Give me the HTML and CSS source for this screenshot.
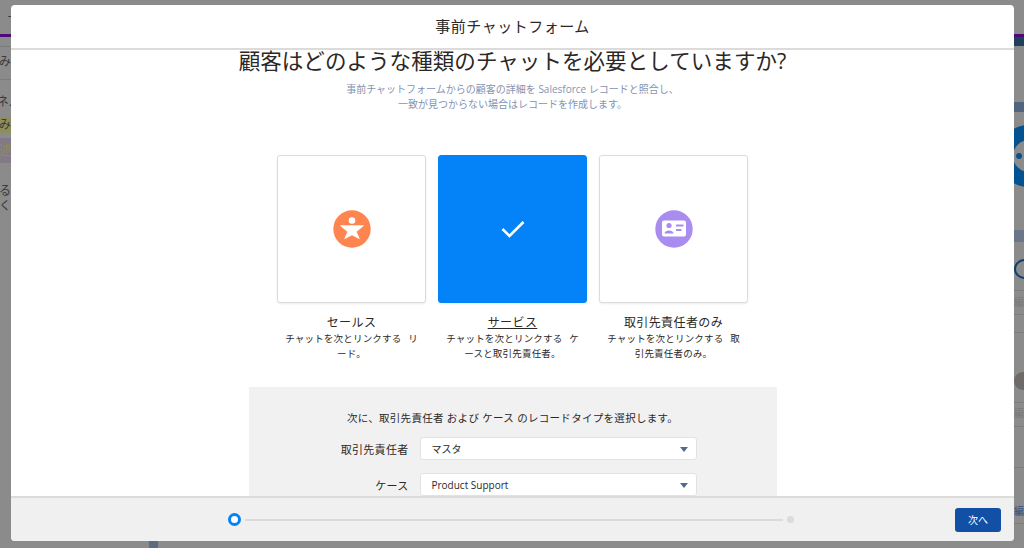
FILE: index.html
```html
<!DOCTYPE html>
<html lang="ja">
<head>
    <meta charset="UTF-8">
    <title>事前チャットフォーム</title>
    <link rel="stylesheet" href="styles.css">
</head>
<body>

    <!-- Dimmed page behind the dialog -->
    <div class="backdrop">
        <div class="back-bar"></div>
        <div class="back-rule back-rule-a"></div>
        <div class="back-rule back-rule-b"></div>
        <div class="back-left">
            <div class="back-line back-line-top">ー</div>
            <div class="back-line back-line-a">組み</div>
            <div class="back-line back-line-b">ネ.</div>
            <div class="back-line back-line-c">組み</div>
            <div class="back-line back-line-d">述</div>
            <div class="back-line back-line-e">いる<br>べく</div>
        </div>
        <div class="back-right">
            <div class="back-navy"></div>
            <div class="back-head back-head-a"></div>
            <div class="back-ring"></div>
            <div class="back-dot"></div>
            <div class="back-head back-head-b"></div>
            <div class="back-arc"></div>
            <div class="back-divider back-divider-a"></div>
            <div class="back-text back-text-a">編集</div>
            <div class="back-divider back-divider-b"></div>
            <div class="back-divider back-divider-c"></div>
            <div class="back-pill"></div>
            <div class="back-divider back-divider-d"></div>
            <div class="back-text back-text-b">編集</div>
            <div class="back-divider back-divider-e"></div>
            <div class="back-divider back-divider-f"></div>
            <div class="back-text back-text-c">編集</div>
            <div class="back-divider back-divider-g"></div>
        </div>
        <div class="back-stub"></div>
    </div>

    <div class="modal">
        <div class="modal-header">事前チャットフォーム</div>

        <div class="modal-body">
            <h1>顧客はどのような種類のチャットを必要としていますか?</h1>
            <p class="intro">事前チャットフォームからの顧客の詳細を Salesforce レコードと照合し、<br>一致が見つからない場合はレコードを作成します。</p>

            <div class="options">
                <div class="option">
                    <div class="tile">
                        <svg class="icon" viewBox="0 0 38 38">
                            <circle cx="19" cy="19" r="18.7" fill="#ff8550"/>
                            <circle cx="19" cy="10.5" r="3.3" fill="#fff"/>
                            <path d="M7.2 15.6 L30.8 15.6 L23.4 21.8 L26.4 28.8 L19 25 L11.6 28.8 L14.6 21.8 Z" fill="#fff" stroke="#fff" stroke-width="0.5" stroke-linejoin="round"/>
                        </svg>
                    </div>
                    <div class="option-title">セールス</div>
                    <div class="option-text">チャットを次とリンクする リード。</div>
                </div>
                <div class="option">
                    <div class="tile tile-on">
                        <svg class="check" viewBox="0 0 24 18">
                            <path d="M1.5 9 L8.5 16 L22.5 2" fill="none" stroke="#fff" stroke-width="2.6"/>
                        </svg>
                    </div>
                    <div class="option-title option-title-on"><span>サービス</span></div>
                    <div class="option-text">チャットを次とリンクする ケースと取引先責任者。</div>
                </div>
                <div class="option">
                    <div class="tile">
                        <svg class="icon" viewBox="0 0 38 38">
                            <circle cx="19" cy="19" r="18.7" fill="#a98cf0"/>
                            <rect x="7" y="10.5" width="24" height="16" rx="2" fill="#fff"/>
                            <circle cx="14" cy="15.5" r="2.6" fill="#a98cf0"/>
                            <path d="M9.5 23.5 C9.5 19.5 18.5 19.5 18.5 23.5 Z" fill="#a98cf0"/>
                            <rect x="21" y="14.5" width="7.5" height="2" fill="#a98cf0"/>
                            <rect x="21" y="19" width="5.5" height="2" fill="#a98cf0"/>
                        </svg>
                    </div>
                    <div class="option-title">取引先責任者のみ</div>
                    <div class="option-text">チャットを次とリンクする 取引先責任者のみ。</div>
                </div>
            </div>

            <div class="record-panel">
                <p class="record-note">次に、取引先責任者 および ケース のレコードタイプを選択します。</p>
                <div class="field">
                    <label class="field-label">取引先責任者</label>
                    <div class="select">マスタ<span class="caret"></span></div>
                </div>
                <div class="field">
                    <label class="field-label">ケース</label>
                    <div class="select">Product Support<span class="caret"></span></div>
                </div>
            </div>
        </div>

        <div class="modal-footer">
            <div class="progress">
                <span class="step-current"></span>
                <span class="step-line"></span>
                <span class="step-next"></span>
            </div>
            <button class="next-btn">次へ</button>
        </div>
    </div>

</body>
</html>
```

FILE: styles.css
```css
* {
    box-sizing: border-box;
}
html, body {
    margin: 0;
    height: 100%;
    overflow: hidden;
}
body {
    position: relative;
    width: 1024px;
    height: 548px;
    background-color: #8b8b8b;
    font-family: "Open Sans", "Noto Sans CJK JP", sans-serif;
    color: #2b2826;
}

/* backdrop */
.backdrop {
    position: absolute;
    inset: 0;
    color: #3a3a3a;
    font-size: 12px;
}
.back-bar {
    position: absolute;
    left: 0;
    right: 0;
    top: 34px;
    height: 3px;
    background-color: #4d0a78;
}
.back-rule {
    position: absolute;
    left: 0;
    width: 11px;
    height: 1px;
    background-color: #7b7b7b;
}
.back-rule-a { top: 46px; }
.back-rule-b { top: 79px; }
.back-left {
    position: absolute;
    left: 0;
    top: 0;
    width: 11px;
    height: 240px;
    overflow: hidden;
}
.back-line {
    position: absolute;
    right: 0;
    width: 30px;
    text-align: right;
    white-space: nowrap;
    line-height: 16px;
}
.back-line-top { top: 10px; right: -8px; }
.back-line-a { top: 54px; }
.back-line-b { top: 94px; right: -1px; }
.back-line-c {
    top: 117px;
    background-color: #8e8e5c;
}
.back-line-d {
    top: 138px;
    height: 25px;
    padding-top: 5px;
    text-align: right;
    background-color: #827a86;
    color: #8e8e5c;
}
.back-line-e {
    top: 183px;
    line-height: 15px;
}
.back-right {
    position: absolute;
    left: 1014px;
    top: 0;
    width: 10px;
    height: 548px;
    overflow: hidden;
}
.back-navy {
    position: absolute;
    left: 0;
    right: 0;
    top: 37px;
    height: 9px;
    background-color: #1f3f5f;
}
.back-head {
    position: absolute;
    left: 0;
    right: 0;
}
.back-head-a {
    top: 102px;
    height: 10px;
    background-color: #4f6580;
}
.back-head-b {
    top: 230px;
    height: 12px;
    background-color: #6b7688;
}
.back-ring {
    position: absolute;
    left: -16px;
    top: 125px;
    width: 62px;
    height: 62px;
    border-radius: 50%;
    border: 15px solid #04528f;
    background-color: #8b8b8b;
}
.back-dot {
    position: absolute;
    left: 2px;
    top: 153px;
    width: 6px;
    height: 6px;
    border-radius: 50%;
    background-color: #04528f;
}
.back-arc {
    position: absolute;
    left: 0;
    top: 259px;
    width: 22px;
    height: 20px;
    border-radius: 50%;
    border: 2px solid #0f3f70;
}
.back-pill {
    position: absolute;
    left: 0;
    top: 372px;
    width: 30px;
    height: 18px;
    border-radius: 9px;
    background-color: #6e6a68;
}
.back-divider {
    position: absolute;
    left: 0;
    right: 0;
    height: 1px;
    background-color: #7d7d7d;
}
.back-divider-a { top: 290px; }
.back-divider-b { top: 314px; }
.back-divider-c { top: 332px; }
.back-divider-d { top: 402px; }
.back-divider-e { top: 426px; }
.back-divider-f { top: 467px; }
.back-divider-g { top: 523px; }
.back-text {
    position: absolute;
    left: 0;
    font-size: 10px;
    line-height: 14px;
    color: #797979;
    white-space: nowrap;
}
.back-text-a { top: 295px; }
.back-text-b { top: 406px; }
.back-text-c {
    top: 504px;
    color: #2c4f7c;
}
.back-stub {
    position: absolute;
    left: 149px;
    top: 541px;
    width: 9px;
    height: 7px;
    background-color: #5d6a80;
}

/* dialog */
.modal {
    position: absolute;
    left: 11px;
    top: 5px;
    width: 1003px;
    height: 536px;
    display: flex;
    flex-direction: column;
    background: white;
    border-radius: 4px;
    overflow: hidden;
}
.modal-header {
    height: 45px;
    flex: none;
    display: flex;
    align-items: center;
    justify-content: center;
    padding-bottom: 2px;
    font-size: 15px;
    letter-spacing: 0.5px;
    border-bottom: 2px solid #dddbda;
}
.modal-body {
    flex: 1;
    min-height: 0;
    overflow: hidden;
    display: flex;
    flex-direction: column;
    align-items: center;
}
.modal-body h1 {
    margin: -1px 0 0;
    font-size: 21.5px;
    font-weight: 400;
    line-height: 24px;
    letter-spacing: 0.07px;
    white-space: nowrap;
}
.intro {
    margin: 9px 0 0;
    font-size: 10px;
    line-height: 15px;
    text-align: center;
    color: #8593b0;
    letter-spacing: 0;
}
.options {
    margin-top: 43px;
    display: flex;
    gap: 12px;
}
.option {
    width: 149px;
    text-align: center;
}
.tile {
    height: 148px;
    display: flex;
    align-items: center;
    justify-content: center;
    background: white;
    border: 1px solid #dddbda;
    border-radius: 3px;
    box-shadow: 0 1px 2px rgba(0, 0, 0, 0.08);
}
.tile-on {
    background-color: #0482f8;
    border-color: #0482f8;
}
.icon {
    width: 38px;
    height: 38px;
}
.check {
    width: 24px;
    height: 18px;
}
.option-title {
    margin-top: 11px;
    font-size: 12px;
    line-height: 18px;
    letter-spacing: 0.4px;
}
.option-title-on span {
    text-decoration: underline;
}
.option-text {
    margin-top: -1px;
    padding: 0 5px;
    font-size: 9.5px;
    line-height: 15px;
    letter-spacing: 0.2px;
    word-spacing: 4px;
    line-break: anywhere;
}
.record-panel {
    margin-top: 26px;
    width: 528px;
    flex: none;
    background-color: #f1f1f1;
    padding: 23px 0 0;
}
.record-note {
    margin: 0 0 11px;
    font-size: 10.5px;
    line-height: 16px;
    text-align: center;
    letter-spacing: 0.3px;
}
.field {
    display: flex;
    align-items: center;
    margin-bottom: 13px;
}
.field-label {
    width: 171px;
    padding-right: 11px;
    text-align: right;
    font-size: 11px;
    letter-spacing: 0.3px;
}
.select {
    position: relative;
    width: 277px;
    height: 23px;
    padding-left: 11px;
    background: white;
    border: 1px solid #e2e2e2;
    border-radius: 3px;
    font-size: 10px;
    line-height: 22px;
}
.caret {
    position: absolute;
    right: 8px;
    top: 9px;
    width: 0;
    height: 0;
    border-left: 4px solid transparent;
    border-right: 4px solid transparent;
    border-top: 5px solid #54698d;
}

/* footer */
.modal-footer {
    height: 45px;
    flex: none;
    display: flex;
    align-items: center;
    padding: 0 13px 0 217px;
    background-color: #f0f0f0;
    border-top: 2px solid #dddbda;
}
.progress {
    flex: 1;
    display: flex;
    align-items: center;
    gap: 4px;
    margin-right: 161px;
}
.step-current {
    width: 13px;
    height: 13px;
    flex: none;
    border-radius: 50%;
    border: 3px solid #0482f8;
    background: white;
}
.step-line {
    flex: 1;
    height: 2px;
    background-color: #dddbda;
}
.step-next {
    width: 7px;
    height: 7px;
    flex: none;
    border-radius: 50%;
    background-color: #dddbda;
}
.next-btn {
    width: 46px;
    height: 24px;
    padding: 0;
    border: none;
    border-radius: 3px;
    background-color: #1150a4;
    color: white;
    font-family: inherit;
    font-size: 10px;
}
```
